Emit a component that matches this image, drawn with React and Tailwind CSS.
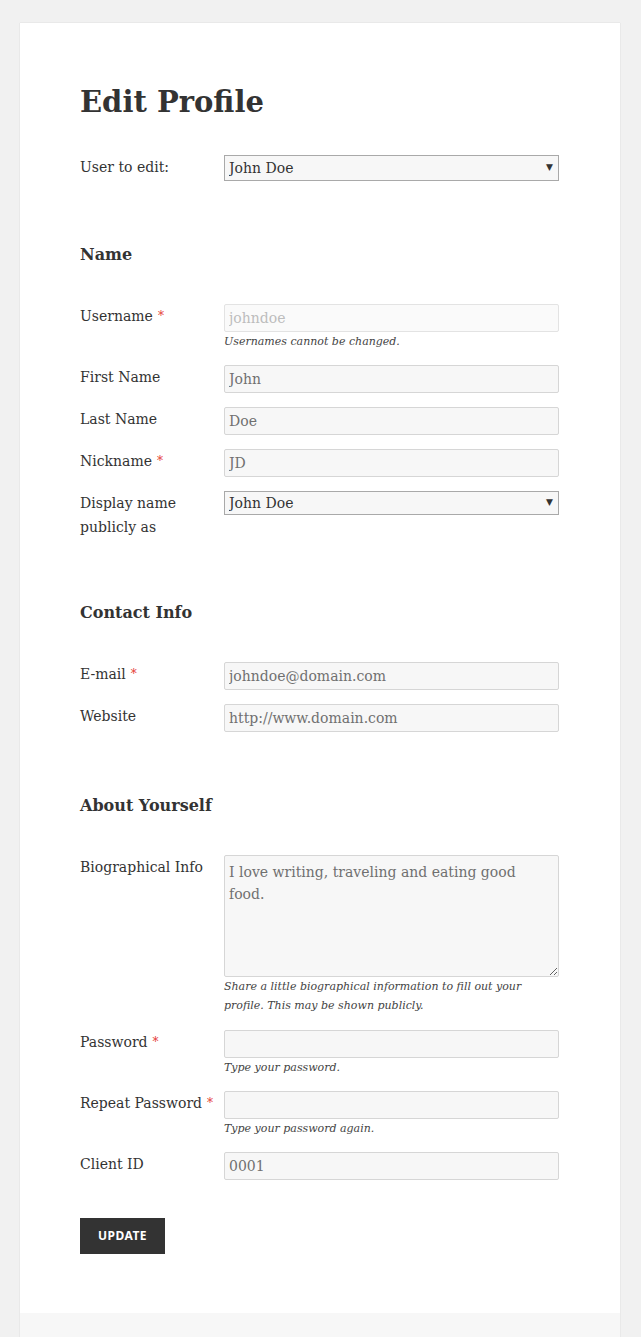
import React from "react";

const serif = { fontFamily: '"DejaVu Serif", "Liberation Serif", serif' };

function Req() {
  return <span className="ml-[5px] text-[12px] align-top text-[#e53935]">*</span>;
}

function Label({ children, req }) {
  return (
    <div className="text-[14px] leading-[24px] text-[#333]">
      {children}
      {req && <Req />}
    </div>
  );
}

function TextInput({ value, disabled }) {
  return (
    <input
      type="text"
      defaultValue={value}
      disabled={disabled}
      className={
        "block h-[28px] w-full rounded-[2px] border px-[4px] text-[14px] outline-none " +
        (disabled
          ? "border-[#e3e3e3] bg-[#fafafa] text-[#bdbdbd]"
          : "border-[#d6d6d6] bg-[#f7f7f7] text-[#707070]")
      }
      style={serif}
    />
  );
}

function Select({ value, h }) {
  return (
    <div className="relative w-full">
      <select
        defaultValue={value}
        className={
          "block w-full appearance-none rounded-none border border-[#a9a9a9] bg-[#f7f7f7] px-[4px] text-[14px] text-[#333] outline-none " +
          h
        }
        style={serif}
      >
        <option>{value}</option>
      </select>
      <span className="pointer-events-none absolute right-[6px] top-1/2 -translate-y-1/2 text-[9px] text-[#333]">
        ▼
      </span>
    </div>
  );
}

function Hint({ children }) {
  return (
    <div className="text-[11px] italic leading-[19px] text-[#444]">
      {children}
    </div>
  );
}

function Row({ label, req, children, className = "" }) {
  return (
    <div className={"grid grid-cols-[144px_335px] " + className}>
      <Label req={req}>{label}</Label>
      <div>{children}</div>
    </div>
  );
}

function Section({ children }) {
  return (
    <h3 className="mt-[62px] mb-[37px] text-[16px] font-bold leading-[24px] text-[#333]">
      {children}
    </h3>
  );
}

export default function App() {
  return (
    <div className="min-h-[1337px] bg-[#f1f1f1] pt-[23px]" style={serif}>
      <div className="ml-[20px] w-[600px] bg-white shadow-[0_0_1px_rgba(0,0,0,0.2)]">
        <div className="px-[60px] pt-[59px] pb-[59px]">
          <h1 className="text-[29px] font-bold leading-[40px] text-[#333]">Edit Profile</h1>

          <Row label="User to edit:" className="mt-[33px]">
            <Select value="John Doe" h="h-[26px]" />
          </Row>

          <Section>Name</Section>

          <Row label="Username" req className="mb-[14px]">
            <TextInput value="johndoe" disabled />
            <Hint>Usernames cannot be changed.</Hint>
          </Row>
          <Row label="First Name" className="mb-[14px]">
            <TextInput value="John" />
          </Row>
          <Row label="Last Name" className="mb-[14px]">
            <TextInput value="Doe" />
          </Row>
          <Row label="Nickname" req className="mb-[14px]">
            <TextInput value="JD" />
          </Row>
          <Row label={<>Display name<br />publicly as</>}>
            <Select value="John Doe" h="h-[24px]" />
          </Row>

          <Section>Contact Info</Section>

          <Row label="E-mail" req className="mb-[14px]">
            <TextInput value="johndoe@domain.com" />
          </Row>
          <Row label="Website">
            <TextInput value="http://www.domain.com" />
          </Row>

          <Section>About Yourself</Section>

          <Row label="Biographical Info" className="mb-[15px]">
            <textarea
              defaultValue="I love writing, traveling and eating good food."
              className="block h-[122px] w-full rounded-[2px] border border-[#d6d6d6] bg-[#f7f7f7] px-[4px] pt-[5px] text-[14px] leading-[22px] text-[#707070] outline-none"
              style={serif}
            />
            <Hint>
              Share a little biographical information to fill out your profile. This may be shown publicly.
            </Hint>
          </Row>
          <Row label="Password" req className="mb-[14px]">
            <TextInput value="" />
            <Hint>Type your password.</Hint>
          </Row>
          <Row label="Repeat Password" req className="mb-[14px]">
            <TextInput value="" />
            <Hint>Type your password again.</Hint>
          </Row>
          <Row label="Client ID">
            <TextInput value="0001" />
          </Row>

          <button
            className="mt-[38px] h-[36px] w-[85px] bg-[#333] text-[12px] font-bold tracking-[0.04em] text-white"
            style={{ fontFamily: '"Noto Sans", sans-serif' }}
          >
            UPDATE
          </button>
        </div>
        <div className="h-[60px] bg-[#f7f7f7]" />
      </div>
    </div>
  );
}
